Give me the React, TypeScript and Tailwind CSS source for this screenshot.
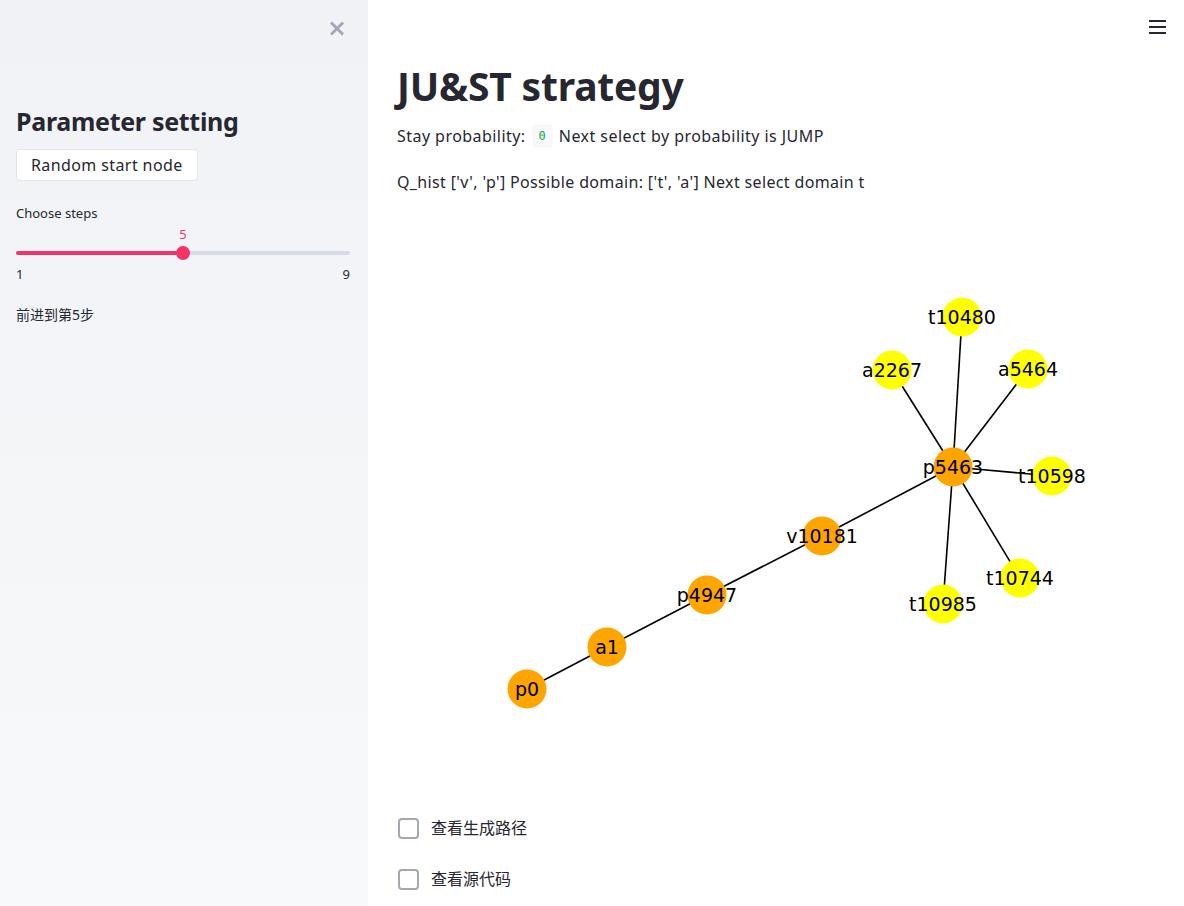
import React from 'react';

const FONT = { fontFamily: '"Noto Sans", "Noto Sans CJK SC", sans-serif' };

type GNode = { id: string; x: number; y: number; color: string };

const NODES: GNode[] = [
  { id: 'p0', x: 527, y: 690, color: '#ffa500' },
  { id: 'a1', x: 607, y: 648, color: '#ffa500' },
  { id: 'p4947', x: 707, y: 596, color: '#ffa500' },
  { id: 'v10181', x: 822, y: 537, color: '#ffa500' },
  { id: 'p5463', x: 953, y: 468, color: '#ffa500' },
  { id: 't10480', x: 962, y: 318, color: '#ffff00' },
  { id: 'a2267', x: 892, y: 371, color: '#ffff00' },
  { id: 'a5464', x: 1028, y: 370, color: '#ffff00' },
  { id: 't10598', x: 1052, y: 477, color: '#ffff00' },
  { id: 't10744', x: 1020, y: 579, color: '#ffff00' },
  { id: 't10985', x: 943, y: 605, color: '#ffff00' },
];

const EDGES: [string, string][] = [
  ['p0', 'a1'],
  ['a1', 'p4947'],
  ['p4947', 'v10181'],
  ['v10181', 'p5463'],
  ['p5463', 't10480'],
  ['p5463', 'a2267'],
  ['p5463', 'a5464'],
  ['p5463', 't10598'],
  ['p5463', 't10744'],
  ['p5463', 't10985'],
];

const Graph: React.FC = () => {
  const pos = Object.fromEntries(NODES.map((n) => [n.id, n]));
  return (
    <svg width={787} height={580} viewBox="397 210 787 580" className="block">
      {EDGES.map(([a, b]) => (
        <line
          key={a + b}
          x1={pos[a].x}
          y1={pos[a].y}
          x2={pos[b].x}
          y2={pos[b].y}
          stroke="#000"
          strokeWidth={1.6}
        />
      ))}
      {NODES.map((n) => (
        <circle key={n.id} cx={n.x} cy={n.y} r={19.5} fill={n.color} />
      ))}
      {NODES.map((n) => (
        <text
          key={n.id + 't'}
          x={n.x}
          y={n.y}
          textAnchor="middle"
          dominantBaseline="central"
          fontFamily='"DejaVu Sans", sans-serif'
          fontSize={19}
          fill="#000"
        >
          {n.id}
        </text>
      ))}
    </svg>
  );
};

const Checkbox: React.FC<{ label: string }> = ({ label }) => (
  <label className="flex items-center gap-[12px] h-[22px] pl-[1px]">
    <span className="w-[21px] h-[21px] rounded-[4px] border-2 border-[#a3a8b4] bg-white"></span>
    <span className="text-[16px] text-[#262730]">{label}</span>
  </label>
);

export default function App() {
  return (
    <div className="flex h-[906px] w-[1184px] overflow-hidden bg-white text-[#262730]" style={FONT}>
      {/* Sidebar */}
      <aside className="w-[368px] shrink-0 bg-linear-to-b from-[#f0f2f6] to-[#f8f9fa] px-4">
        <div className="flex justify-end pt-[21px] pr-[8px]">
          <svg width="14" height="15" viewBox="0 0 14 15">
            <path d="M2 2.5l10 10M12 2.5l-10 10" stroke="#a3a8b4" strokeWidth="3" strokeLinecap="square" />
          </svg>
        </div>
        <h2 className="mt-[68px] text-[25px] font-bold leading-[34px] tracking-[-0.3px]">Parameter setting</h2>
        <button className="mt-[11px] h-[32px] px-[14px] bg-white border border-[#e3e5ea] rounded-[4px] text-[16px] tracking-[0.4px]">
          Random start node
        </button>
        <div className="mt-[24px] text-[13px] leading-[16px]">Choose steps</div>
        <div className="relative mt-[4px] h-[40px]">
          <div className="absolute left-[159px] top-[0px] w-[16px] text-center text-[13px] text-[#f63366]">5</div>
          <div className="absolute left-0 right-[2px] top-[26px] h-[4px] rounded-full bg-[#d5dae5]"></div>
          <div className="absolute left-0 w-[167px] top-[26px] h-[4px] rounded-l-full bg-[#f63366]"></div>
          <div className="absolute left-[160px] top-[21px] w-[14px] h-[14px] rounded-full bg-[#f63366]"></div>
        </div>
        <div className="flex justify-between pr-[2px] text-[13px] leading-[18px]">
          <span>1</span>
          <span>9</span>
        </div>
        <div className="mt-[21px] text-[14px]">前进到第5步</div>
      </aside>

      {/* Main */}
      <main className="relative flex-1 pl-[29px]">
        <div className="absolute right-[18px] top-[20px] flex flex-col gap-[4px]">
          <span className="block w-[17px] h-[2px] bg-[#262730]"></span>
          <span className="block w-[17px] h-[2px] bg-[#262730]"></span>
          <span className="block w-[17px] h-[2px] bg-[#262730]"></span>
        </div>
        <h1 className="mt-[62px] text-[39px] font-bold leading-[48px] tracking-[-0.2px]">JU&amp;ST strategy</h1>
        <p className="mt-[14px] text-[16px] leading-[24px] tracking-[0.45px] flex items-center">
          Stay probability:
          <code
            className="mx-[6px] px-[7px] rounded-[4px] bg-[#f9f9fb] text-[#09ab3b] text-[12px] leading-[24px] tracking-normal"
            style={{ fontFamily: '"DejaVu Sans Mono", monospace' }}
          >
            0
          </code>
          Next select by probability is JUMP
        </p>
        <p className="mt-[22px] text-[16px] leading-[24px] tracking-[0.35px]">
          Q_hist ['v', 'p'] Possible domain: ['t', 'a'] Next select domain t
        </p>
        <div className="mt-[15px]">
          <Graph />
        </div>
        <div className="mt-[28px] flex flex-col gap-[29px]">
          <Checkbox label="查看生成路径" />
          <Checkbox label="查看源代码" />
        </div>
      </main>
    </div>
  );
}
